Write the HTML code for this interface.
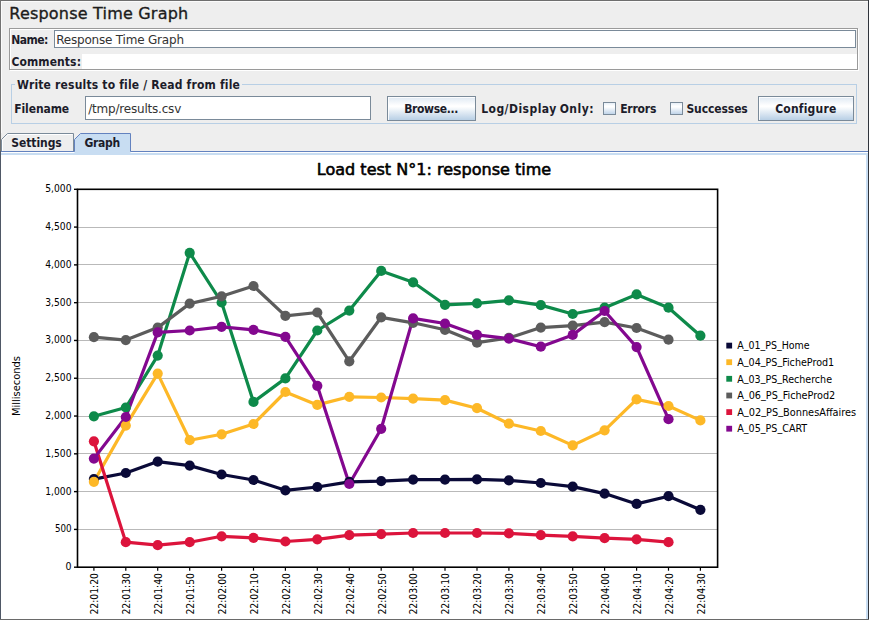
<!DOCTYPE html>
<html lang="en"><head><meta charset="utf-8"><title>Response Time Graph</title>
<style>
html,body{margin:0;padding:0;}
body{width:869px;height:620px;overflow:hidden;background:#eeeeee;font-family:"DejaVu Sans","Liberation Sans",sans-serif;color:#222;}
#win{position:relative;width:869px;height:620px;overflow:hidden;background:#eeeeee;}
.abs{position:absolute;}
.b{font-family:"DejaVu Sans Condensed","DejaVu Sans","Liberation Sans",sans-serif;font-weight:bold;font-size:12px;line-height:14px;white-space:nowrap;color:#1c1c2a;}
.r{font-size:12px;line-height:14px;white-space:nowrap;color:#333;letter-spacing:-0.2px;}
.field{position:absolute;background:#fff;border:1px solid #7a8a99;box-sizing:border-box;}
.btn{position:absolute;box-sizing:border-box;border:1px solid #7a8a99;background:linear-gradient(#dfe9f3 0%,#ffffff 38%,#ffffff 42%,#b8cfe5 100%);text-align:center;box-shadow:inset 1px 1px 0 rgba(255,255,255,.85);}
.cb{position:absolute;box-sizing:border-box;width:13px;height:13px;border:1px solid #7a8a99;background:linear-gradient(#e6eef7 0%,#ffffff 28%,#ffffff 36%,#c0d4e9 100%);}
.chart{position:absolute;left:0;top:0;}
</style></head><body>
<div id="win">
<!-- title -->
<div class="abs" id="title" style="left:9.3px;top:4px;font-size:16px;line-height:20px;letter-spacing:0.2px;white-space:nowrap;color:#1c1c1c;-webkit-text-stroke:0.35px #1c1c1c;">Response Time Graph</div>
<!-- name/comments box -->
<div class="abs" style="left:9px;top:28px;width:849px;height:42px;box-sizing:border-box;border:1px solid #9a9a9a;box-shadow:1px 1px 0 #fff, inset 1px 1px 0 #fff;"></div>
<div class="abs b" id="lname" style="left:11.2px;top:33px;letter-spacing:-0.5px;">Name:</div>
<div class="field" style="left:54px;top:30px;width:802px;height:18px;"></div>
<div class="abs r" id="tname" style="left:56.2px;top:33px;">Response Time Graph</div>
<div class="abs b" id="lcomm" style="left:11.4px;top:55px;letter-spacing:0.1px;">Comments:</div>
<div class="abs" style="left:82px;top:54px;width:775px;height:15px;background:#fff;"></div>
<!-- file panel -->
<div class="abs" style="left:11px;top:84px;width:846px;height:40px;box-sizing:border-box;border:1px solid #b8cfe5;"></div>
<div class="abs b" id="lwrite" style="left:15px;top:78px;padding:0 2px;background:#eee;letter-spacing:0.18px;">Write results to file / Read from file</div>
<div class="abs b" id="lfile" style="left:14.2px;top:102px;letter-spacing:-0.1px;">Filename</div>
<div class="field" style="left:85px;top:96px;width:286px;height:24px;"></div>
<div class="abs r" id="tfile" style="left:88.2px;top:102px;">/tmp/results.csv</div>
<div class="btn" style="left:387px;top:96px;width:89px;height:25px;"></div>
<div class="abs b" id="lbrowse" style="left:404.2px;top:102px;letter-spacing:-0.35px;">Browse...</div>
<div class="abs b" id="llog" style="left:481.2px;top:102px;letter-spacing:0.46px;word-spacing:-1.2px;">Log/Display Only:</div>
<div class="cb" style="left:603px;top:102px;"></div>
<div class="abs b" id="lerr" style="left:620.2px;top:102px;letter-spacing:-0.2px;">Errors</div>
<div class="cb" style="left:670px;top:102px;"></div>
<div class="abs b" id="lsuc" style="left:686.4px;top:102px;letter-spacing:-0.1px;">Successes</div>
<div class="btn" style="left:758px;top:96px;width:96px;height:25px;"></div>
<div class="abs b" id="lconf" style="left:775.2px;top:102px;letter-spacing:0.2px;">Configure</div>
<!-- tabs + content -->
<div class="abs" style="left:1px;top:155px;width:865px;height:464px;background:#fff;"></div>
<div class="abs" style="left:1px;top:153px;width:867px;height:2px;background:#c8ddf2;"></div>
<div class="abs" style="left:866px;top:153px;width:2px;height:466px;background:#c8ddf2;"></div>
<div class="abs" style="left:1px;top:152px;width:867px;height:1px;background:#fff;"></div>
<div class="abs" style="left:1px;top:151px;width:867px;height:1px;background:#6382bf;"></div>
<svg class="chart" width="869" height="620" viewBox="0 0 869 620">
<path d="M1.5 151 V139.5 L7.5 133.5 H73.5 V151" fill="#eeeeee" stroke="#7a8a99" stroke-width="1"/>
<path d="M2.5 151 V140 L8 134.5 H72.5" fill="none" stroke="#ffffff" stroke-width="1"/>
<rect x="1" y="151" width="73.500" height="1" fill="#6382bf"/>
<path d="M74.500 155 V139.5 L80.500 133.500 H130.500 V155 Z" fill="#c8ddf2" stroke="none"/>
<path d="M74.5 151.5 V139.5 L80.5 133.5 H130.5 V151.5" fill="none" stroke="#6382bf" stroke-width="1"/>
</svg>
<div class="abs b" id="lset" style="left:11.2px;top:136px;letter-spacing:-0.05px;">Settings</div>
<div class="abs b" id="lgraph" style="left:84.6px;top:136px;letter-spacing:-0.35px;">Graph</div>
<svg class="chart" width="869" height="620" viewBox="0 0 869 620">
<line x1="77.5" x2="717.6" y1="529.5" y2="529.5" stroke="#b9b9b9" stroke-width="1"/>
<line x1="77.5" x2="717.6" y1="491.5" y2="491.5" stroke="#b9b9b9" stroke-width="1"/>
<line x1="77.5" x2="717.6" y1="453.5" y2="453.5" stroke="#b9b9b9" stroke-width="1"/>
<line x1="77.5" x2="717.6" y1="416.5" y2="416.5" stroke="#b9b9b9" stroke-width="1"/>
<line x1="77.5" x2="717.6" y1="378.5" y2="378.5" stroke="#b9b9b9" stroke-width="1"/>
<line x1="77.5" x2="717.6" y1="340.5" y2="340.5" stroke="#b9b9b9" stroke-width="1"/>
<line x1="77.5" x2="717.6" y1="302.5" y2="302.5" stroke="#b9b9b9" stroke-width="1"/>
<line x1="77.5" x2="717.6" y1="264.5" y2="264.5" stroke="#b9b9b9" stroke-width="1"/>
<line x1="77.5" x2="717.6" y1="227.5" y2="227.5" stroke="#b9b9b9" stroke-width="1"/>
<polyline points="93.9,479.1 125.8,473.0 157.7,461.6 189.7,465.6 221.6,474.5 253.5,480.0 285.4,490.3 317.3,487.0 349.3,481.8 381.2,481.1 413.1,479.6 445.0,479.6 477.0,479.3 508.9,480.4 540.8,483.0 572.7,486.6 604.6,493.6 636.6,503.9 668.5,496.2 700.4,509.8" fill="none" stroke="#0a0a38" stroke-width="3.2" stroke-linejoin="round" stroke-linecap="round"/>
<polyline points="93.9,481.8 125.8,425.6 157.7,373.6 189.7,440.2 221.6,434.3 253.5,424.0 285.4,392.0 317.3,404.9 349.3,396.8 381.2,397.5 413.1,398.6 445.0,400.1 477.0,408.2 508.9,423.7 540.8,431.0 572.7,445.4 604.6,430.3 636.6,399.4 668.5,406.0 700.4,420.4" fill="none" stroke="#fdb827" stroke-width="3.2" stroke-linejoin="round" stroke-linecap="round"/>
<polyline points="93.9,416.3 125.8,407.5 157.7,355.6 189.7,252.8 221.6,302.5 253.5,401.9 285.4,378.4 317.3,330.5 349.3,310.6 381.2,270.9 413.1,282.3 445.0,304.8 477.0,303.3 508.9,300.3 540.8,305.1 572.7,314.0 604.6,307.7 636.6,294.4 668.5,307.7 700.4,335.7" fill="none" stroke="#0e8a4a" stroke-width="3.2" stroke-linejoin="round" stroke-linecap="round"/>
<polyline points="93.9,337.2 125.8,340.1 157.7,327.6 189.7,303.6 221.6,296.3 253.5,286.0 285.4,315.8 317.3,312.5 349.3,361.3 381.2,317.3 413.1,322.8 445.0,329.8 477.0,342.7 508.9,337.9 540.8,327.6 572.7,325.7 604.6,322.1 636.6,328.0 668.5,339.7" fill="none" stroke="#5c5c5c" stroke-width="3.2" stroke-linejoin="round" stroke-linecap="round"/>
<polyline points="93.9,441.3 125.8,542.2 157.7,545.2 189.7,542.2 221.6,536.3 253.5,537.8 285.4,541.5 317.3,539.3 349.3,535.2 381.2,534.1 413.1,533.0 445.0,533.0 477.0,533.0 508.9,533.4 540.8,535.2 572.7,536.3 604.6,538.2 636.6,539.3 668.5,542.2" fill="none" stroke="#dc143c" stroke-width="3.2" stroke-linejoin="round" stroke-linecap="round"/>
<polyline points="93.9,458.6 125.8,417.0 157.7,332.4 189.7,330.5 221.6,326.8 253.5,329.8 285.4,336.8 317.3,385.8 349.3,484.0 381.2,428.8 413.1,318.4 445.0,323.5 477.0,334.9 508.9,338.6 540.8,346.7 572.7,334.9 604.6,311.0 636.6,347.1 668.5,419.2" fill="none" stroke="#83088f" stroke-width="3.2" stroke-linejoin="round" stroke-linecap="round"/>
<g fill="#0a0a38"><circle cx="93.9" cy="479.1" r="5.1"/><circle cx="125.8" cy="473.0" r="5.1"/><circle cx="157.7" cy="461.6" r="5.1"/><circle cx="189.7" cy="465.6" r="5.1"/><circle cx="221.6" cy="474.5" r="5.1"/><circle cx="253.5" cy="480.0" r="5.1"/><circle cx="285.4" cy="490.3" r="5.1"/><circle cx="317.3" cy="487.0" r="5.1"/><circle cx="349.3" cy="481.8" r="5.1"/><circle cx="381.2" cy="481.1" r="5.1"/><circle cx="413.1" cy="479.6" r="5.1"/><circle cx="445.0" cy="479.6" r="5.1"/><circle cx="477.0" cy="479.3" r="5.1"/><circle cx="508.9" cy="480.4" r="5.1"/><circle cx="540.8" cy="483.0" r="5.1"/><circle cx="572.7" cy="486.6" r="5.1"/><circle cx="604.6" cy="493.6" r="5.1"/><circle cx="636.6" cy="503.9" r="5.1"/><circle cx="668.5" cy="496.2" r="5.1"/><circle cx="700.4" cy="509.8" r="5.1"/></g>
<g fill="#fdb827"><circle cx="93.9" cy="481.8" r="5.1"/><circle cx="125.8" cy="425.6" r="5.1"/><circle cx="157.7" cy="373.6" r="5.1"/><circle cx="189.7" cy="440.2" r="5.1"/><circle cx="221.6" cy="434.3" r="5.1"/><circle cx="253.5" cy="424.0" r="5.1"/><circle cx="285.4" cy="392.0" r="5.1"/><circle cx="317.3" cy="404.9" r="5.1"/><circle cx="349.3" cy="396.8" r="5.1"/><circle cx="381.2" cy="397.5" r="5.1"/><circle cx="413.1" cy="398.6" r="5.1"/><circle cx="445.0" cy="400.1" r="5.1"/><circle cx="477.0" cy="408.2" r="5.1"/><circle cx="508.9" cy="423.7" r="5.1"/><circle cx="540.8" cy="431.0" r="5.1"/><circle cx="572.7" cy="445.4" r="5.1"/><circle cx="604.6" cy="430.3" r="5.1"/><circle cx="636.6" cy="399.4" r="5.1"/><circle cx="668.5" cy="406.0" r="5.1"/><circle cx="700.4" cy="420.4" r="5.1"/></g>
<g fill="#0e8a4a"><circle cx="93.9" cy="416.3" r="5.1"/><circle cx="125.8" cy="407.5" r="5.1"/><circle cx="157.7" cy="355.6" r="5.1"/><circle cx="189.7" cy="252.8" r="5.1"/><circle cx="221.6" cy="302.5" r="5.1"/><circle cx="253.5" cy="401.9" r="5.1"/><circle cx="285.4" cy="378.4" r="5.1"/><circle cx="317.3" cy="330.5" r="5.1"/><circle cx="349.3" cy="310.6" r="5.1"/><circle cx="381.2" cy="270.9" r="5.1"/><circle cx="413.1" cy="282.3" r="5.1"/><circle cx="445.0" cy="304.8" r="5.1"/><circle cx="477.0" cy="303.3" r="5.1"/><circle cx="508.9" cy="300.3" r="5.1"/><circle cx="540.8" cy="305.1" r="5.1"/><circle cx="572.7" cy="314.0" r="5.1"/><circle cx="604.6" cy="307.7" r="5.1"/><circle cx="636.6" cy="294.4" r="5.1"/><circle cx="668.5" cy="307.7" r="5.1"/><circle cx="700.4" cy="335.7" r="5.1"/></g>
<g fill="#5c5c5c"><circle cx="93.9" cy="337.2" r="5.1"/><circle cx="125.8" cy="340.1" r="5.1"/><circle cx="157.7" cy="327.6" r="5.1"/><circle cx="189.7" cy="303.6" r="5.1"/><circle cx="221.6" cy="296.3" r="5.1"/><circle cx="253.5" cy="286.0" r="5.1"/><circle cx="285.4" cy="315.8" r="5.1"/><circle cx="317.3" cy="312.5" r="5.1"/><circle cx="349.3" cy="361.3" r="5.1"/><circle cx="381.2" cy="317.3" r="5.1"/><circle cx="413.1" cy="322.8" r="5.1"/><circle cx="445.0" cy="329.8" r="5.1"/><circle cx="477.0" cy="342.7" r="5.1"/><circle cx="508.9" cy="337.9" r="5.1"/><circle cx="540.8" cy="327.6" r="5.1"/><circle cx="572.7" cy="325.7" r="5.1"/><circle cx="604.6" cy="322.1" r="5.1"/><circle cx="636.6" cy="328.0" r="5.1"/><circle cx="668.5" cy="339.7" r="5.1"/></g>
<g fill="#dc143c"><circle cx="93.9" cy="441.3" r="5.1"/><circle cx="125.8" cy="542.2" r="5.1"/><circle cx="157.7" cy="545.2" r="5.1"/><circle cx="189.7" cy="542.2" r="5.1"/><circle cx="221.6" cy="536.3" r="5.1"/><circle cx="253.5" cy="537.8" r="5.1"/><circle cx="285.4" cy="541.5" r="5.1"/><circle cx="317.3" cy="539.3" r="5.1"/><circle cx="349.3" cy="535.2" r="5.1"/><circle cx="381.2" cy="534.1" r="5.1"/><circle cx="413.1" cy="533.0" r="5.1"/><circle cx="445.0" cy="533.0" r="5.1"/><circle cx="477.0" cy="533.0" r="5.1"/><circle cx="508.9" cy="533.4" r="5.1"/><circle cx="540.8" cy="535.2" r="5.1"/><circle cx="572.7" cy="536.3" r="5.1"/><circle cx="604.6" cy="538.2" r="5.1"/><circle cx="636.6" cy="539.3" r="5.1"/><circle cx="668.5" cy="542.2" r="5.1"/></g>
<g fill="#83088f"><circle cx="93.9" cy="458.6" r="5.1"/><circle cx="125.8" cy="417.0" r="5.1"/><circle cx="157.7" cy="332.4" r="5.1"/><circle cx="189.7" cy="330.5" r="5.1"/><circle cx="221.6" cy="326.8" r="5.1"/><circle cx="253.5" cy="329.8" r="5.1"/><circle cx="285.4" cy="336.8" r="5.1"/><circle cx="317.3" cy="385.8" r="5.1"/><circle cx="349.3" cy="484.0" r="5.1"/><circle cx="381.2" cy="428.8" r="5.1"/><circle cx="413.1" cy="318.4" r="5.1"/><circle cx="445.0" cy="323.5" r="5.1"/><circle cx="477.0" cy="334.9" r="5.1"/><circle cx="508.9" cy="338.6" r="5.1"/><circle cx="540.8" cy="346.7" r="5.1"/><circle cx="572.7" cy="334.9" r="5.1"/><circle cx="604.6" cy="311.0" r="5.1"/><circle cx="636.6" cy="347.1" r="5.1"/><circle cx="668.5" cy="419.2" r="5.1"/></g>
<rect x="77.5" y="189.3" width="640.1" height="377.9" fill="none" stroke="#000" stroke-width="1.6"/>
<g font-family="'DejaVu Sans Condensed','DejaVu Sans','Liberation Sans',sans-serif" font-size="10.5" fill="#000">
<line x1="74" x2="77.5" y1="567.20" y2="567.20" stroke="#000" stroke-width="1.4"/>
<text x="65.5" y="570.1" textLength="6.0" lengthAdjust="spacingAndGlyphs">0</text>
<line x1="74" x2="77.5" y1="529.41" y2="529.41" stroke="#000" stroke-width="1.4"/>
<text x="54.9" y="532.3" textLength="16.6" lengthAdjust="spacingAndGlyphs">500</text>
<line x1="74" x2="77.5" y1="491.62" y2="491.62" stroke="#000" stroke-width="1.4"/>
<text x="45.3" y="494.5" textLength="26.2" lengthAdjust="spacingAndGlyphs">1,000</text>
<line x1="74" x2="77.5" y1="453.83" y2="453.83" stroke="#000" stroke-width="1.4"/>
<text x="45.3" y="456.7" textLength="26.2" lengthAdjust="spacingAndGlyphs">1,500</text>
<line x1="74" x2="77.5" y1="416.04" y2="416.04" stroke="#000" stroke-width="1.4"/>
<text x="45.3" y="418.9" textLength="26.2" lengthAdjust="spacingAndGlyphs">2,000</text>
<line x1="74" x2="77.5" y1="378.25" y2="378.25" stroke="#000" stroke-width="1.4"/>
<text x="45.3" y="381.1" textLength="26.2" lengthAdjust="spacingAndGlyphs">2,500</text>
<line x1="74" x2="77.5" y1="340.46" y2="340.46" stroke="#000" stroke-width="1.4"/>
<text x="45.3" y="343.4" textLength="26.2" lengthAdjust="spacingAndGlyphs">3,000</text>
<line x1="74" x2="77.5" y1="302.67" y2="302.67" stroke="#000" stroke-width="1.4"/>
<text x="45.3" y="305.6" textLength="26.2" lengthAdjust="spacingAndGlyphs">3,500</text>
<line x1="74" x2="77.5" y1="264.88" y2="264.88" stroke="#000" stroke-width="1.4"/>
<text x="45.3" y="267.8" textLength="26.2" lengthAdjust="spacingAndGlyphs">4,000</text>
<line x1="74" x2="77.5" y1="227.09" y2="227.09" stroke="#000" stroke-width="1.4"/>
<text x="45.3" y="230.0" textLength="26.2" lengthAdjust="spacingAndGlyphs">4,500</text>
<line x1="74" x2="77.5" y1="189.30" y2="189.30" stroke="#000" stroke-width="1.4"/>
<text x="45.3" y="192.2" textLength="26.2" lengthAdjust="spacingAndGlyphs">5,000</text>
<line x1="93.9" x2="93.9" y1="567.2" y2="570.7" stroke="#000" stroke-width="1.2"/>
<text transform="translate(98.2,614.6) rotate(-90)" textLength="41.6" lengthAdjust="spacingAndGlyphs">22:01:20</text>
<line x1="125.8" x2="125.8" y1="567.2" y2="570.7" stroke="#000" stroke-width="1.2"/>
<text transform="translate(130.1,614.6) rotate(-90)" textLength="41.6" lengthAdjust="spacingAndGlyphs">22:01:30</text>
<line x1="157.7" x2="157.7" y1="567.2" y2="570.7" stroke="#000" stroke-width="1.2"/>
<text transform="translate(162.0,614.6) rotate(-90)" textLength="41.6" lengthAdjust="spacingAndGlyphs">22:01:40</text>
<line x1="189.7" x2="189.7" y1="567.2" y2="570.7" stroke="#000" stroke-width="1.2"/>
<text transform="translate(194.0,614.6) rotate(-90)" textLength="41.6" lengthAdjust="spacingAndGlyphs">22:01:50</text>
<line x1="221.6" x2="221.6" y1="567.2" y2="570.7" stroke="#000" stroke-width="1.2"/>
<text transform="translate(225.9,614.6) rotate(-90)" textLength="41.6" lengthAdjust="spacingAndGlyphs">22:02:00</text>
<line x1="253.5" x2="253.5" y1="567.2" y2="570.7" stroke="#000" stroke-width="1.2"/>
<text transform="translate(257.8,614.6) rotate(-90)" textLength="41.6" lengthAdjust="spacingAndGlyphs">22:02:10</text>
<line x1="285.4" x2="285.4" y1="567.2" y2="570.7" stroke="#000" stroke-width="1.2"/>
<text transform="translate(289.7,614.6) rotate(-90)" textLength="41.6" lengthAdjust="spacingAndGlyphs">22:02:20</text>
<line x1="317.3" x2="317.3" y1="567.2" y2="570.7" stroke="#000" stroke-width="1.2"/>
<text transform="translate(321.6,614.6) rotate(-90)" textLength="41.6" lengthAdjust="spacingAndGlyphs">22:02:30</text>
<line x1="349.3" x2="349.3" y1="567.2" y2="570.7" stroke="#000" stroke-width="1.2"/>
<text transform="translate(353.6,614.6) rotate(-90)" textLength="41.6" lengthAdjust="spacingAndGlyphs">22:02:40</text>
<line x1="381.2" x2="381.2" y1="567.2" y2="570.7" stroke="#000" stroke-width="1.2"/>
<text transform="translate(385.5,614.6) rotate(-90)" textLength="41.6" lengthAdjust="spacingAndGlyphs">22:02:50</text>
<line x1="413.1" x2="413.1" y1="567.2" y2="570.7" stroke="#000" stroke-width="1.2"/>
<text transform="translate(417.4,614.6) rotate(-90)" textLength="41.6" lengthAdjust="spacingAndGlyphs">22:03:00</text>
<line x1="445.0" x2="445.0" y1="567.2" y2="570.7" stroke="#000" stroke-width="1.2"/>
<text transform="translate(449.3,614.6) rotate(-90)" textLength="41.6" lengthAdjust="spacingAndGlyphs">22:03:10</text>
<line x1="477.0" x2="477.0" y1="567.2" y2="570.7" stroke="#000" stroke-width="1.2"/>
<text transform="translate(481.3,614.6) rotate(-90)" textLength="41.6" lengthAdjust="spacingAndGlyphs">22:03:20</text>
<line x1="508.9" x2="508.9" y1="567.2" y2="570.7" stroke="#000" stroke-width="1.2"/>
<text transform="translate(513.2,614.6) rotate(-90)" textLength="41.6" lengthAdjust="spacingAndGlyphs">22:03:30</text>
<line x1="540.8" x2="540.8" y1="567.2" y2="570.7" stroke="#000" stroke-width="1.2"/>
<text transform="translate(545.1,614.6) rotate(-90)" textLength="41.6" lengthAdjust="spacingAndGlyphs">22:03:40</text>
<line x1="572.7" x2="572.7" y1="567.2" y2="570.7" stroke="#000" stroke-width="1.2"/>
<text transform="translate(577.0,614.6) rotate(-90)" textLength="41.6" lengthAdjust="spacingAndGlyphs">22:03:50</text>
<line x1="604.6" x2="604.6" y1="567.2" y2="570.7" stroke="#000" stroke-width="1.2"/>
<text transform="translate(608.9,614.6) rotate(-90)" textLength="41.6" lengthAdjust="spacingAndGlyphs">22:04:00</text>
<line x1="636.6" x2="636.6" y1="567.2" y2="570.7" stroke="#000" stroke-width="1.2"/>
<text transform="translate(640.9,614.6) rotate(-90)" textLength="41.6" lengthAdjust="spacingAndGlyphs">22:04:10</text>
<line x1="668.5" x2="668.5" y1="567.2" y2="570.7" stroke="#000" stroke-width="1.2"/>
<text transform="translate(672.8,614.6) rotate(-90)" textLength="41.6" lengthAdjust="spacingAndGlyphs">22:04:20</text>
<line x1="700.4" x2="700.4" y1="567.2" y2="570.7" stroke="#000" stroke-width="1.2"/>
<text transform="translate(704.7,614.6) rotate(-90)" textLength="41.6" lengthAdjust="spacingAndGlyphs">22:04:30</text>
<text transform="translate(20.2,416) rotate(-90)" textLength="60" lengthAdjust="spacingAndGlyphs">Milliseconds</text>
<rect x="726.3" y="342.7" width="5.8" height="5.8" fill="#0a0a38"/>
<text x="737.2" y="349.3" textLength="72.4" lengthAdjust="spacingAndGlyphs">A<tspan dy="-1.7">_</tspan><tspan dy="1.7">01</tspan><tspan dy="-1.7">_</tspan><tspan dy="1.7">PS</tspan><tspan dy="-1.7">_</tspan><tspan dy="1.7">Home</tspan></text>
<rect x="726.3" y="359.3" width="5.8" height="5.8" fill="#fdb827"/>
<text x="737.2" y="365.9" textLength="97" lengthAdjust="spacingAndGlyphs">A<tspan dy="-1.7">_</tspan><tspan dy="1.7">04</tspan><tspan dy="-1.7">_</tspan><tspan dy="1.7">PS</tspan><tspan dy="-1.7">_</tspan><tspan dy="1.7">FicheProd1</tspan></text>
<rect x="726.3" y="375.9" width="5.8" height="5.8" fill="#0e8a4a"/>
<text x="737.2" y="382.5" textLength="94.8" lengthAdjust="spacingAndGlyphs">A<tspan dy="-1.7">_</tspan><tspan dy="1.7">03</tspan><tspan dy="-1.7">_</tspan><tspan dy="1.7">PS</tspan><tspan dy="-1.7">_</tspan><tspan dy="1.7">Recherche</tspan></text>
<rect x="726.3" y="392.6" width="5.8" height="5.8" fill="#5c5c5c"/>
<text x="737.2" y="399.2" textLength="98" lengthAdjust="spacingAndGlyphs">A<tspan dy="-1.7">_</tspan><tspan dy="1.7">06</tspan><tspan dy="-1.7">_</tspan><tspan dy="1.7">PS</tspan><tspan dy="-1.7">_</tspan><tspan dy="1.7">FicheProd2</tspan></text>
<rect x="726.3" y="409.2" width="5.8" height="5.8" fill="#dc143c"/>
<text x="737.2" y="415.8" textLength="119" lengthAdjust="spacingAndGlyphs">A<tspan dy="-1.7">_</tspan><tspan dy="1.7">02</tspan><tspan dy="-1.7">_</tspan><tspan dy="1.7">PS</tspan><tspan dy="-1.7">_</tspan><tspan dy="1.7">BonnesAffaires</tspan></text>
<rect x="726.3" y="425.8" width="5.8" height="5.8" fill="#83088f"/>
<text x="737.2" y="432.4" textLength="70" lengthAdjust="spacingAndGlyphs">A<tspan dy="-1.7">_</tspan><tspan dy="1.7">05</tspan><tspan dy="-1.7">_</tspan><tspan dy="1.7">PS</tspan><tspan dy="-1.7">_</tspan><tspan dy="1.7">CART</tspan></text>
</g>
<text x="434" y="174.6" text-anchor="middle" font-family="'DejaVu Sans','Liberation Sans',sans-serif" font-size="15" textLength="234.5" lengthAdjust="spacingAndGlyphs" fill="#000" stroke="#000" stroke-width="0.55" stroke-linejoin="round">Load test N°1: response time</text>
</svg>
<!-- window borders -->
<div class="abs" style="left:1px;top:1px;width:867px;height:1px;background:#fbfbfb;"></div>
<div class="abs" style="left:1px;top:1px;width:1px;height:132px;background:#fbfbfb;"></div>
<div class="abs" style="left:0;top:0;width:869px;height:1px;background:#6e6e6e;"></div>
<div class="abs" style="left:0;top:0;width:1px;height:151px;background:#727272;"></div>
<div class="abs" style="left:0;top:151px;width:1px;height:469px;background:#4f5866;"></div>
<div class="abs" style="left:868px;top:0;width:1px;height:620px;background:#30343c;"></div>
<div class="abs" style="left:0;top:619px;width:869px;height:1px;background:#6a6a6a;"></div>
</div>
</body></html>
